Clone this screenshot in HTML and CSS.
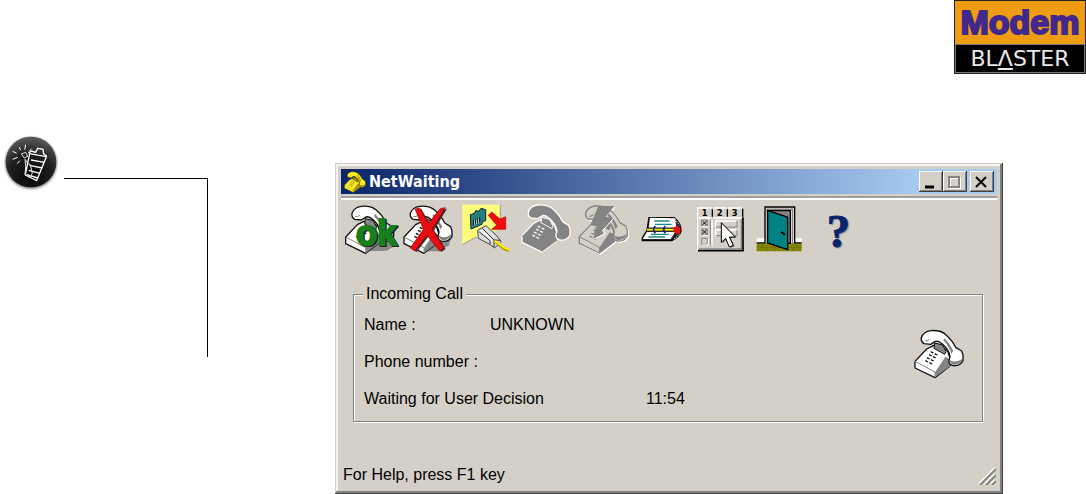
FILE: index.html
```html
<!DOCTYPE html>
<html lang="en">
<head>
<meta charset="utf-8">
<title>NetWaiting</title>
<link rel="stylesheet" href="styles.css">
</head>
<body>
<svg class="defs" aria-hidden="true">
  <defs>
    <g id="phone" stroke-linejoin="round">
      <path class="p-top" d="M3 97L38 60 58 50 100 64 112 100 107 112 63 146 3 117Z"/>
      <path class="p-side" d="M63 130L94 84 108 90 110 110 64 144Z"/>
      <path class="p-line" d="M3 97L63 129V145" fill="none"/>
      <path class="p-dark" d="M62 42L86 48 96 68 92 76 60 58Z"/>
      <path class="p-keys" d="M50 68l8 4M62 74l8 4M45 77l8 4M57 83l8 4M39 86l8 4M51 92l8 4M34 95l8 4M46 101l8 4" fill="none"/>
      <path class="p-top" d="M22 26Q28 8 50 5Q75 2 92 14Q114 32 125 55L143 66 147 78V95Q138 112 118 110Q104 108 105 95L108 82Q104 62 86 46Q70 32 62 38L50 46 30 44Q20 38 22 26Z"/>
      <path class="p-shade" d="M107 92Q122 104 144 90V96Q132 108 118 107Q108 104 107 92ZM30 36Q42 40 48 30M92 28Q108 44 118 66L112 74Q104 50 88 34Z"/>
    </g>
  </defs>
</svg>

<header class="header">
  <div class="logo">
    <div class="logo-top">Modem</div>
    <div class="logo-bottom">BL<span class="logo-a">Λ</span>STER</div>
  </div>
</header>

<main class="main">
  <aside class="note">
    <svg class="note-icon" viewBox="0 0 168 168" role="img" aria-label="Note">
      <defs>
        <radialGradient id="ball" cx=".5" cy=".78" r=".75"><stop offset="0" stop-color="#050505"/><stop offset=".6" stop-color="#202020"/><stop offset="1" stop-color="#585858"/></radialGradient>
        <radialGradient id="halo"><stop offset=".86" stop-color="#777"/><stop offset="1" stop-color="#fff"/></radialGradient>
      </defs>
      <circle cx="84" cy="84" r="83" fill="url(#halo)"/>
      <circle cx="84" cy="81" r="76" fill="url(#ball)"/>
      <g fill="none" stroke="#fff" stroke-width="4">
        <path d="M80 56L130 65 101 137 67 120 74 84Z"/>
        <path d="M84 75L124 82M80 91L118 99M77 106L111 115M72 119L104 129"/>
        <path d="M76 54l10-6 12 4 6-12 16 3 2 14 9 6" stroke-width="4"/>
        <path d="M55 57l13-5 6 12-10 5ZM66 73l8 12 8 4 6 26-8 12-14-8 2-25Z" stroke="#e4e4e4" stroke-width="3"/>
        <path d="M53 45l-5-9M65 44l3-15M41 55l-12-6M44 67l-15 6M50 77l-7 9M78 49l8-8" stroke-width="3"/>
      </g>
    </svg>
    <div class="note-rule"></div>
  </aside>

  <section class="window" aria-label="NetWaiting">
    <div class="titlebar">
      <svg class="title-icon phone-yellow" viewBox="0 0 150 150" aria-hidden="true"><use href="#phone"/></svg>
      <h1 class="title">NetWaiting</h1>
      <div class="controls">
        <button class="control" aria-label="Minimize"><svg viewBox="0 0 16 14"><path d="M3 12h9" stroke="#000" stroke-width="3"/></svg></button>
        <button class="control" aria-label="Maximize" disabled><svg viewBox="0 0 16 14"><path d="M4 3h10v10H4z" fill="none" stroke="#fff" stroke-width="2"/><path d="M3 2h10v10H3z" fill="none" stroke="#848484" stroke-width="2"/></svg></button>
        <button class="control control-close" aria-label="Close"><svg viewBox="0 0 16 14"><path d="M3 2l10 10M13 2L3 12" stroke="#000" stroke-width="2"/></svg></button>
      </div>
    </div>

    <nav class="toolbar" aria-label="Call actions">
      <button class="tool" aria-label="Accept call"><svg class="phone" viewBox="0 0 174 174">
        <path d="M75 154l60-42h22v28l-20 12Z" fill="#888"/>
        <use href="#phone" x="11" y="14"/>
        <text class="ok-shadow" x="49" y="138">ok</text><text class="ok" x="45" y="135">ok</text>
      </svg></button>
      <button class="tool" aria-label="Reject call"><svg class="phone" viewBox="0 0 174 174">
        <path d="M70 154l88-46-8 28-30 18Z" fill="#888"/>
        <use href="#phone" x="12" y="14"/>
        <path d="M48 27L62 24 88 70 124 26 139 23 100 88 135 144 122 153 84 106 48 153 34 144 73 88Z" fill="#333" transform="translate(5 3)"/>
        <path d="M48 27L62 24 88 70 124 26 139 23 100 88 135 144 122 153 84 106 48 153 34 144 73 88Z" fill="#e80c10" stroke="#900" stroke-width="2"/>
      </svg></button>
      <button class="tool" aria-label="Disconnect"><svg viewBox="0 0 174 174">
        <defs><pattern id="dots" width="6" height="6" patternUnits="userSpaceOnUse"><path d="M0 0h6v6H0z" fill="#ffff58"/><path d="M0 0h3v3H0zM3 3h3v3H3z" fill="#fffda0"/></pattern></defs>
        <path d="M16 14H130V88L60 110 16 134Z" fill="url(#dots)"/><path d="M130 14v62M16 134l42-23" stroke="#999" stroke-width="3"/>
        <path d="M40 44L54 39 56 32 66 34 72 25 86 29V62L76 65 75 73 42 87Z" fill="#267f80" stroke="#123" stroke-width="3"/>
        <path d="M50 61v15M56 58v15M62 55v15M68 52v15" stroke="#000" stroke-width="3"/><path d="M53 61v15M59 58v15M65 55v15" stroke="#fff" stroke-width="2"/>
        <path d="M94 46L104 36 129 57 146 50V88H104L119 76Z" fill="#f00c10" stroke="#b00" stroke-width="2"/>
        <path d="M62 91L87 77 119 107 132 125 113 144 98 133 64 115Z" fill="#ddd" stroke="#444" stroke-width="3"/>
        <path d="M76 85L111 120 132 121M67 96L99 122V133M111 121V142" fill="none" stroke="#333" stroke-width="3"/><path d="M73 91L105 121" stroke="#fff" stroke-width="6"/>
        <path d="M113 124L126 132Q137 147 157 151" fill="none" stroke="#aaa200" stroke-width="9"/><path d="M113 123L127 131Q138 144 159 149" fill="none" stroke="#fff000" stroke-width="6"/>
      </svg></button>
      <button class="tool" aria-label="Answer" disabled><svg class="phone-off phone-solid" viewBox="0 0 174 174">
        <use href="#phone" x="18" y="10"/>
      </svg></button>
      <button class="tool" aria-label="Quick answer" disabled><svg class="phone-off" viewBox="0 0 174 174">
        <use href="#phone" x="16" y="13"/>
        <path d="M76 18H124L98 50 121 55 87 91 92 101 62 117 65 89 74 79 52 76Z" fill="#848484"/><path d="M121 56L90 91 96 101 64 117" fill="none" stroke="#fff" stroke-width="3"/>
      </svg></button>
      <button class="tool" aria-label="Call log"><svg viewBox="0 0 174 174">
        <path d="M54 53H130Q151 70 150 94Q146 110 122 122H34V114L48 91Z" fill="#222" stroke="#000" stroke-width="4"/>
        <path d="M57 53L133 55 136 83H53ZM48 95H133L119 117H35Z" fill="#fff"/>
        <path d="M70 63h46M72 73h50M60 103h52M52 111h50" stroke="#178b8b" stroke-width="4"/>
        <path d="M48 89H132" stroke="#111" stroke-width="12"/><path d="M48 89H132" stroke="#f2ed00" stroke-width="6"/>
        <path d="M73 78q-10 10 0 22M103 78q-10 10 0 22" fill="none" stroke="#10238c" stroke-width="5"/>
        <path d="M127 83L139 77 148 84V97L140 103 128 96Z" fill="#f00c10"/><path d="M132 58l14 18M148 101l-21 19" stroke="#aaa" stroke-width="4" stroke-dasharray="4 3"/>
      </svg></button>
      <button class="tool" aria-label="Options"><svg viewBox="0 0 174 174">
        <path d="M28 24H160V152H28Z" fill="#d4d0c8"/><path d="M26 152V24H68M74 24H112M118 24H158" fill="none" stroke="#fff" stroke-width="4"/><path d="M27 152H162V52" fill="none" stroke="#000" stroke-width="5"/><path d="M30 147H157V54" fill="none" stroke="#848484" stroke-width="4"/>
        <path d="M70 28v22M115 28v22M161 26v24" stroke="#000" stroke-width="4"/>
        <text class="tab-label" x="38" y="47">1</text><text class="tab-label" x="83" y="47">2</text><text class="tab-label" x="128" y="47">3</text>
        <path d="M30 54H67M74 54H158M69 60V136M80 83V63H141M80 109V90H141" fill="none" stroke="#fff" stroke-width="4"/>
        <path d="M64 60V136M81 81H144V64M81 107H144V91" fill="none" stroke="#848484" stroke-width="3"/>
        <path d="M38 60h17v18H38zM38 87h17v18H38zM38 115h17v18H38z" fill="none" stroke="#848484" stroke-width="3"/><path d="M38 135h20v-20M38 107h20M38 80h20" fill="none" stroke="#fff" stroke-width="3"/>
        <path d="M40 63l13 12M53 63L40 75M40 90l13 12M53 90L40 102" stroke="#000" stroke-width="3"/>
        <path d="M97 68V127L110 115 121 141 133 136 121 111H139Z" fill="#777" transform="translate(4 3)"/><path d="M97 68V127L110 115 121 141 133 136 121 111H139Z" fill="#fff" stroke="#000" stroke-width="3"/>
      </svg></button>
      <button class="tool" aria-label="Exit"><svg viewBox="0 0 174 174">
        <path d="M29 115H164V128H29Z" fill="#fff"/><path d="M29 129H164" stroke="#000" stroke-width="4"/>
        <path d="M29 131H164V154H29Z" fill="#858500"/><path d="M29 142H164M45 131v11M83 142v12M60 142v12M148 131v11M136 142v12" stroke="#6a6a18" stroke-width="2"/>
        <path d="M54 130V21H143V130" fill="#d4d0c8" stroke="#000" stroke-width="4"/><path d="M61 130V28H136V130" fill="#fff" stroke="#848484" stroke-width="4"/>
        <path d="M65 130V32H130V130Z" fill="#848484" stroke="#000" stroke-width="4"/>
        <path d="M62 31L122 52V149L62 129Z" fill="#008284" stroke="#000" stroke-width="4"/><path d="M102 96l10 6v4" fill="none" stroke="#000" stroke-width="5"/>
      </svg></button>
      <button class="tool" aria-label="Help"><svg viewBox="0 0 174 174">
        <text class="help-shadow" x="69" y="144">?</text><text class="help" x="65" y="142">?</text>
      </svg></button>
    </nav>

    <fieldset class="call">
      <legend class="legend">Incoming Call</legend>
      <dl class="details">
        <div class="row"><dt class="label">Name :</dt><dd class="value">UNKNOWN</dd></div>
        <div class="row"><dt class="label">Phone number :</dt><dd class="value"></dd></div>
        <div class="row"><dt class="label label-wide">Waiting for User Decision</dt><dd class="value">11:54</dd></div>
      </dl>
      <svg class="call-icon phone" viewBox="0 0 150 150" aria-hidden="true"><use href="#phone"/></svg>
    </fieldset>

    <footer class="status">
      <span>For Help, press F1 key</span>
      <svg class="grip" viewBox="0 0 18 18" aria-hidden="true"><path d="M1 17L17 1M7 17L17 7M13 17L17 13" stroke="#fff" stroke-width="2"/><path d="M2 18L18 2M8 18L18 8M14 18L18 14" stroke="#848484" stroke-width="2"/></svg>
    </footer>
  </section>
</main>
</body>
</html>
```
FILE: styles.css
```css
* { box-sizing: border-box; }

body {
  margin: 0;
  background: #fff;
  color: #000;
  font: 16px/20px "Liberation Sans", Arial, sans-serif;
}

.defs { position: absolute; width: 0; height: 0; }

.header { display: flex; justify-content: flex-end; }

.logo {
  width: 132px;
  border: 1px solid #222;
  background: #000;
  overflow: hidden;
  text-align: center;
}

.logo-top {
  background: #f09c10;
  color: #40288c;
  font-size: 34px;
  font-weight: bold;
  line-height: 43px;
  -webkit-text-stroke: 2px #40288c;
}

.logo-bottom {
  border: 1px solid #777;
  color: #e8e8e8;
  font: 22px/27px "DejaVu Sans", sans-serif;
}

.logo-a { text-decoration: underline; text-decoration-thickness: 2px; text-underline-offset: 2px; }

.main { display: flex; align-items: flex-start; padding-right: 83px; }

.note {
  flex: 0 0 335px;
  display: flex;
  align-items: flex-start;
  gap: 5px;
  padding: 61px 0 0 3px;
}

.note-icon { width: 56px; height: 56px; }

.note-rule {
  width: 144px;
  height: 179px;
  margin-top: 43px;
  border-top: 1px solid #000;
  border-right: 1px solid #000;
}

.window {
  flex: 1;
  min-width: 0;
  margin-top: 89px;
  padding: 6px;
  background: #d4d0c8;
  box-shadow: inset -1px -1px #404040, inset 1px 1px #d4d0c8, inset -3px -3px #808080, inset 3px 3px #f4f2ee;
}

.titlebar {
  display: flex;
  align-items: center;
  height: 25px;
  padding: 0 3px 0 2px;
  background: linear-gradient(90deg, #0a246a, #a6caf0 88%);
}

.title-icon { width: 24px; height: 22px; }

.title {
  flex: 1;
  margin: 0 0 0 2px;
  color: #fff;
  font: bold 16px/24px "DejaVu Sans Condensed", "DejaVu Sans", sans-serif;
}

.controls { display: flex; }

.control {
  width: 24px;
  height: 21px;
  padding: 2px 3px;
  border: 0;
  background: #d4d0c8;
  box-shadow: inset -1px -1px #404040, inset 1px 1px #fff, inset -2px -2px #808080;
}

.control svg { display: block; width: 16px; height: 14px; }
.control-close { margin-left: 3px; }

.toolbar {
  display: flex;
  flex-wrap: wrap;
  margin-top: 2px;
  border-top: 2px solid #a09f9c;
  box-shadow: inset 0 2px #fff;
  padding-top: 2px;
}

.tool { width: 58px; height: 58px; padding: 0; border: 0; background: none; }
.tool svg { display: block; width: 58px; height: 58px; }

.phone { --top: #fff; --side: #848484; --line: #111; }
.phone-yellow { --top: #ffee2a; --side: #a99500; --line: #4a4200; }
.phone-off { --top: #d4d0c8; --side: #848484; --line: #848484; filter: drop-shadow(1px 1px #fff); }
.phone-solid { --top: #848484; --line: #fff; filter: none; }

.p-top { fill: var(--top); stroke: var(--line); stroke-width: 4px; }
.p-side, .p-shade { fill: var(--side); }
.p-dark { fill: var(--side); stroke: var(--line); stroke-width: 3px; }
.p-line { stroke: var(--side); stroke-width: 3px; }
.p-keys { stroke: var(--line); stroke-width: 4px; }

.ok, .ok-shadow { font: bold 104px "Liberation Sans Narrow", "Liberation Sans", sans-serif; stroke-width: 6px; }
.ok { fill: #16801c; stroke: #16801c; }
.ok-shadow { fill: #222; stroke: #222; }

.tab-label { font: bold 25px "DejaVu Sans", sans-serif; }

.help, .help-shadow { font: bold 140px "Liberation Serif", serif; stroke-width: 3px; }
.help { fill: #0a246a; stroke: #0a246a; }
.help-shadow { fill: #999; stroke: #999; }

.call {
  display: flex;
  justify-content: space-between;
  align-items: flex-start;
  min-width: 0;
  margin: 26px 14px 0 12px;
  padding: 0 18px 4px 10px;
  border: 1px solid #848484;
  box-shadow: 1px 1px #fff, inset 1px 1px #fff;
}

.legend { margin-left: -1px; padding: 0 3px; background: #d4d0c8; }

.details { display: flex; flex-direction: column; gap: 17px; margin: 0; padding: 11px 0 8px; }
.row { display: flex; min-height: 20px; }
.label { width: 126px; }
.label-wide { width: 282px; }
.value { margin: 0; }
.call-icon { width: 50px; height: 50px; margin-top: 25px; }

.status {
  display: flex;
  justify-content: space-between;
  align-items: flex-end;
  margin-top: 43px;
  padding: 0 1px 3px 2px;
}

.grip { width: 18px; height: 18px; }
```
